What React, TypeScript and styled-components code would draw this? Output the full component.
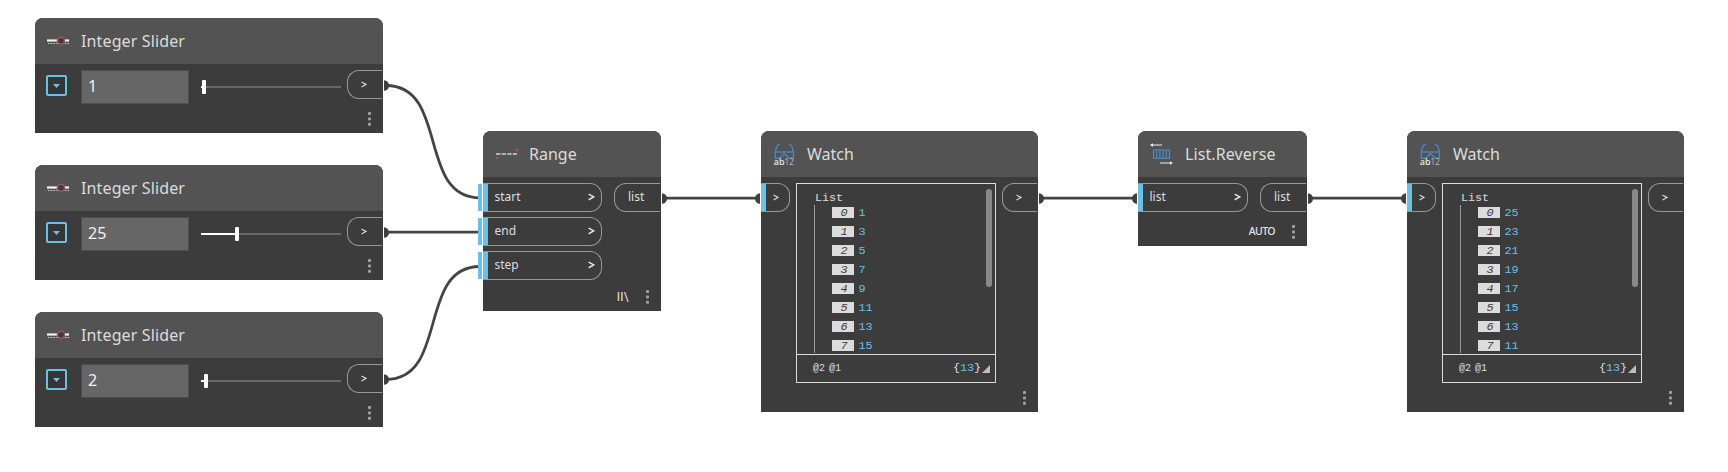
import React from "react";
import styled, { createGlobalStyle, css } from "styled-components";

const Global = createGlobalStyle`
  * { box-sizing: border-box; }
  body { margin: 0; background: #fff; overflow: hidden; }
`;

const blue = "#6ac0e7";
const outline = "#989898";

const Canvas = styled.main`
  position: relative;
  width: 1728px;
  height: 472px;
  overflow: hidden;
  background: #fff;
  font-family: "Noto Sans", "Open Sans", sans-serif;
`;

const Wires = styled.svg`
  position: absolute;
  inset: 0;
`;

const Node = styled.section<{ $x: number; $y: number; $w: number; $h: number }>`
  position: absolute;
  left: ${(p) => p.$x}px;
  top: ${(p) => p.$y}px;
  width: ${(p) => p.$w}px;
  height: ${(p) => p.$h}px;
  display: flex;
  flex-direction: column;
  border-radius: 8px 8px 0 0;
  background: #3c3c3c;
`;

const Header = styled.header<{ $pad: number; $gap: number }>`
  height: 46px;
  flex: none;
  display: flex;
  align-items: center;
  gap: ${(p) => p.$gap}px;
  padding-left: ${(p) => p.$pad}px;
  border-radius: 8px 8px 0 0;
  background: #535353;
  svg { flex: none; display: block; overflow: visible; }
`;

const Title = styled.h2<{ $track?: number }>`
  margin: 0;
  font-size: 16px;
  line-height: 22px;
  font-weight: 400;
  letter-spacing: ${(p) => p.$track ?? 0}px;
  color: #dcdcdc;
  white-space: nowrap;
`;

const Body = styled.div`
  flex: 1;
  display: flex;
  align-items: flex-start;
  justify-content: space-between;
  padding: 6px 1px 0 0;
`;

const PortColumn = styled.div`
  display: flex;
  flex-direction: column;
  gap: 5px;
`;

const portBase = css`
  height: 29px;
  display: flex;
  align-items: center;
  border: 1px solid ${outline};
  font-size: 12px;
  line-height: 16px;
  color: #dcdcdc;
  padding-bottom: 1px;
`;

const InPort = styled.div<{ $w: number; $small?: boolean }>`
  ${portBase}
  position: relative;
  width: ${(p) => p.$w}px;
  justify-content: space-between;
  border-left: 0;
  border-radius: 0 12px 12px 0;
  padding-left: ${(p) => (p.$small ? 12 : 11.5)}px;
  padding-right: ${(p) => (p.$small ? 10 : 6)}px;
  &::before {
    content: "";
    position: absolute;
    left: 0;
    top: 0;
    width: 5px;
    height: 27px;
    background: ${blue};
  }
`;

const DefaultMark = styled.i`
  position: absolute;
  left: -5px;
  top: 0;
  width: 4px;
  height: 27px;
  background: ${blue};
`;

const OutPort = styled.div<{ $w: number }>`
  ${portBase}
  width: ${(p) => p.$w}px;
  border-right: 0;
  border-radius: 12px 0 0 12px;
  padding-left: 13px;
`;

const Footer = styled.footer`
  height: 22px;
  flex: none;
  display: flex;
  align-items: flex-start;
  justify-content: flex-end;
  gap: 17px;
  padding: 0.5px 12px 0 0;
`;

const State = styled.span<{ $bold?: boolean }>`
  font-family: ${(p) => (p.$bold ? '"Noto Sans"' : "Roboto")}, sans-serif;
  font-size: ${(p) => (p.$bold ? 10.5 : 12)}px;
  line-height: ${(p) => (p.$bold ? 13 : 14)}px;
  letter-spacing: ${(p) => (p.$bold ? -0.6 : 0.3)}px;
  font-weight: ${(p) => (p.$bold ? 500 : 400)};
  color: #e4e4e4;
`;

const Toggle = styled.button`
  width: 21px;
  height: 21px;
  margin: 5px 14px 0 11px;
  padding: 0;
  display: grid;
  place-items: center;
  border: 2px solid ${blue};
  border-radius: 2px;
  background: #353535;
`;

const NumberBox = styled.div`
  width: 108px;
  height: 34px;
  padding-left: 6px;
  border: 1px solid #4e4e4e;
  background: #666;
  color: #f2f2f2;
  font-size: 16px;
  line-height: 31px;
`;

const Track = styled.div`
  position: relative;
  width: 140px;
  height: 2px;
  margin: 16px 6px 0 12px;
  background: #686868;
`;

const Fill = styled.div<{ $w: number }>`
  width: ${(p) => p.$w}px;
  height: 2px;
  background: #fff;
`;

const Thumb = styled.div<{ $x: number }>`
  position: absolute;
  left: ${(p) => p.$x}px;
  top: -6px;
  width: 4px;
  height: 14px;
  border-radius: 1px;
  background: #fff;
`;

const WatchBox = styled.div`
  width: 200px;
  height: 200px;
  display: flex;
  flex-direction: column;
  border: 1px solid #dcdcdc;
  font-family: "Liberation Mono", monospace;
  font-size: 11.8px;
  letter-spacing: -0.1px;
`;

const WatchList = styled.div`
  height: 170px;
  display: flex;
  justify-content: space-between;
  padding: 5px 3px 0 17px;
`;

const ListName = styled.div`
  padding-left: 1px;
  height: 16px;
  line-height: 18px;
  color: #dcdcdc;
`;

const Rows = styled.div`
  height: 148px;
  overflow: hidden;
  border-left: 1px solid ${outline};
  padding: 2px 0 0 17px;
`;

const Row = styled.div`
  display: flex;
  gap: 4.5px;
  height: 11px;
  margin-bottom: 8px;
  line-height: 13px;
`;

const Index = styled.span`
  width: 22px;
  padding-left: 2px;
  text-align: center;
  font-style: italic;
  color: #3c3c3c;
  background: #dcdcdc;
`;

const Value = styled.span`
  color: ${blue};
`;

const Scrollbar = styled.div`
  width: 6px;
  height: 98px;
  border-radius: 3px;
  background: #898989;
`;

const WatchFooter = styled.div`
  flex: 1;
  display: flex;
  align-items: center;
  padding: 0 5px 1px 16px;
  border-top: 1px solid #dcdcdc;
  color: #dcdcdc;
`;

const Levels = styled.span`
  flex: 1;
  display: flex;
  gap: 4px;
  padding-top: 1px;
  font-size: 10px;
  letter-spacing: 0;
`;

const Grip = styled.svg`
  margin: 2px 0 0 1px;
`;

const Dots = () => (
  <svg width="3" height="15" fill="#a0a0a0">
    <rect x="0" y="0" width="3" height="3" rx="0.8" />
    <rect x="0" y="5.4" width="3" height="3" rx="0.8" />
    <rect x="0" y="10.8" width="3" height="3" rx="0.8" />
  </svg>
);

const Chevron = ({ large }: { large?: boolean }) => (
  <svg
    width={large ? 7 : 6}
    height={large ? 8 : 7}
    viewBox="0 0 6 7"
    fill="none"
    stroke={large ? "#e4e4e4" : "#dcdcdc"}
    strokeWidth={large ? 1.3 : 1.1}
  >
    <path d="M.5 1 5 3.4.5 5.9" />
  </svg>
);

const SliderIcon = () => (
  <svg width="22" height="12" viewBox="0 0 22 12">
    <path d="M0 5.5H22" stroke="#f4f4f4" strokeWidth="2.2" />
    <path d="M1 8.5H22" stroke="#d0d0d0" strokeWidth="1.1" strokeDasharray="1.5 1.3" />
    <circle cx="14" cy="5.8" r="3.5" fill="#3c3c3c" stroke="#a65353" strokeWidth="1.5" />
  </svg>
);

const RangeIcon = () => (
  <svg width="24" height="12" viewBox="0 0 24 12">
    <path d="M1 6H22" stroke="#cfcfcf" strokeWidth="1.3" strokeDasharray="4.4 1.2" />
    <path d="M0 11 2 8.4 4 11Z" fill="#a85656" />
    <path d="M20 1.3H24L22 4Z" fill="#a85656" />
  </svg>
);

const WatchIcon = () => (
  <svg width="21" height="23" viewBox="0 0 21 23">
    <g fill="none" stroke="#4a86c0" strokeWidth="1.4">
      <path d="M6 1.2C3.2 1.2 2.6 3.4 1.3 9V15.3H5.5L10.3 10.5 15.2 15.3H19.4V9C18.1 3.4 17.5 1.2 14.7 1.2" />
      <path d="M1 9H19.5" />
    </g>
    <text x="-.2" y="22" fontFamily="Noto Sans, sans-serif" fontSize="9" fontWeight="500" fill="#ececec">ab</text>
    <text x="10.6" y="22" fontFamily="Noto Sans, sans-serif" fontSize="8" fill="#b8b8b8">12</text>
  </svg>
);

const ReverseIcon = () => (
  <svg width="23" height="22" viewBox="0 0 23 22">
    <path d="M1 2H12M10 20H21" stroke="#f0f0f0" strokeWidth="1" />
    <path d="M0 2 3 .3V3.7ZM23 20 20 18.3V21.7Z" fill="#f0f0f0" />
    <path d="M3.5 7H19.5V15.3H3.5ZM6.7 7V15.3M9.9 7V15.3M13.1 7V15.3M16.3 7V15.3" fill="none" stroke="#4a90d0" strokeWidth="1.1" />
  </svg>
);

const IntegerSlider = ({ y, value, thumb }: { y: number; value: number; thumb: number }) => (
  <Node $x={35} $y={y} $w={348} $h={115}>
    <Header $pad={12} $gap={12}>
      <SliderIcon />
      <Title $track={0.13}>Integer Slider</Title>
    </Header>
    <Body>
      <Toggle>
        <svg width="7" height="4"><path d="M0 0H7L3.5 4Z" fill={blue} /></svg>
      </Toggle>
      <NumberBox>{value}</NumberBox>
      <Track>
        <Fill $w={thumb} />
        <Thumb $x={thumb} />
      </Track>
      <OutPort $w={35}><Chevron /></OutPort>
    </Body>
    <Footer><Dots /></Footer>
  </Node>
);

const Watch = ({ x, values }: { x: number; values: number[] }) => (
  <Node $x={x} $y={131} $w={277} $h={281}>
    <Header $pad={13} $gap={12}>
      <WatchIcon />
      <Title>Watch</Title>
    </Header>
    <Body>
      <InPort $w={29} $small><Chevron /></InPort>
      <WatchBox>
        <WatchList>
          <div>
            <ListName>List</ListName>
            <Rows>
              {values.map((v, i) => (
                <Row key={i}><Index>{i}</Index><Value>{v}</Value></Row>
              ))}
            </Rows>
          </div>
          <Scrollbar />
        </WatchList>
        <WatchFooter>
          <Levels><span>@2</span><span>@1</span></Levels>
          <span>{"{"}<Value>13</Value>{"}"}</span>
          <Grip width="8" height="8"><path d="M8 0V8H0Z" fill="#bcbcbc" /></Grip>
        </WatchFooter>
      </WatchBox>
      <OutPort $w={35}><Chevron /></OutPort>
    </Body>
    <Footer><Dots /></Footer>
  </Node>
);

const rightDots: [number, number][] = [[384, 85.5], [384, 232.5], [384, 379.5], [662, 198.5], [1039, 198.5], [1308, 198.5]];
const leftDots: [number, number][] = [[760, 198.5], [1137, 198.5], [1406, 198.5]];

export default function App() {
  return (
    <Canvas>
      <Global />
      <Wires width="1728" height="472">
        <g fill="none" stroke="#444" strokeWidth="2.8">
          <path d="M386 85.5C449 85.5 417 197.8 480 197.8" />
          <path d="M386 232.1H480" />
          <path d="M386 379.5C449 379.5 417 266.5 480 266.5" />
          <path d="M664 198.1H758M1041 198.1H1135M1310 198.1H1404" />
        </g>
        <g fill="#3f3f3f">
          {rightDots.map(([x, y]) => <path key={x + "-" + y} d={`M${x} ${y - 5.3}a5 5.3 0 0 1 0 10.6Z`} />)}
          {leftDots.map(([x, y]) => <path key={x} d={`M${x} ${y - 5.3}a5 5.3 0 0 0 0 10.6Z`} />)}
        </g>
      </Wires>

      <IntegerSlider y={18} value={1} thumb={1} />
      <IntegerSlider y={165} value={25} thumb={34} />
      <IntegerSlider y={312} value={2} thumb={3} />

      <Node $x={483} $y={131} $w={178} $h={180}>
        <Header $pad={12} $gap={10}>
          <RangeIcon />
          <Title>Range</Title>
        </Header>
        <Body>
          <PortColumn>
            {["start", "end", "step"].map((name) => (
              <InPort key={name} $w={119}><DefaultMark />{name}<Chevron large /></InPort>
            ))}
          </PortColumn>
          <OutPort $w={46}>list</OutPort>
        </Body>
        <Footer><State>II\</State><Dots /></Footer>
      </Node>

      <Watch x={761} values={[1, 3, 5, 7, 9, 11, 13, 15]} />

      <Node $x={1138} $y={131} $w={169} $h={115}>
        <Header $pad={12} $gap={12}>
          <ReverseIcon />
          <Title $track={0.1}>List.Reverse</Title>
        </Header>
        <Body>
          <InPort $w={110}>list<Chevron large /></InPort>
          <OutPort $w={46}>list</OutPort>
        </Body>
        <Footer><State $bold>AUTO</State><Dots /></Footer>
      </Node>

      <Watch x={1407} values={[25, 23, 21, 19, 17, 15, 13, 11]} />
    </Canvas>
  );
}
